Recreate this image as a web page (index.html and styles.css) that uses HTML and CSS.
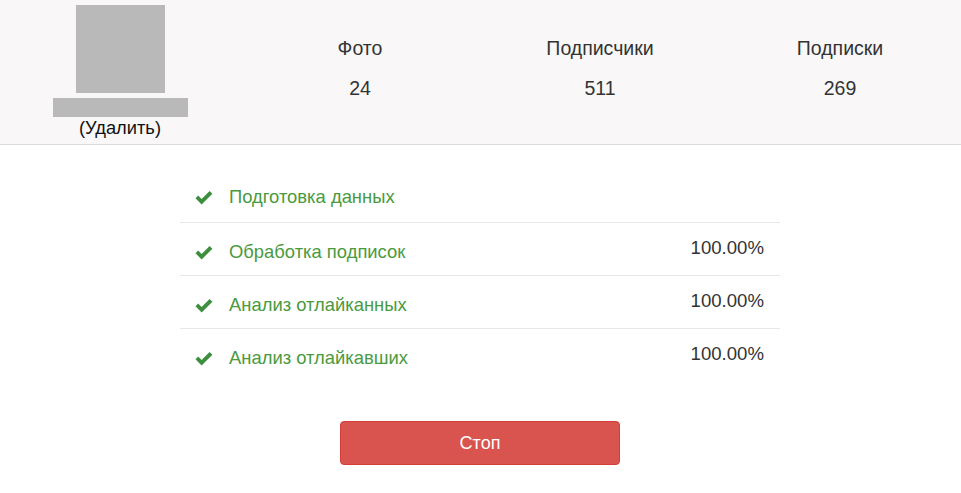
FILE: index.html
```html
<!DOCTYPE html>
<html lang="ru">
<head>
<meta charset="utf-8">
<link rel="stylesheet" href="styles.css">
</head>
<body>
<header class="profile">
  <div class="col avatar-col">
    <div class="avatar"></div>
    <div class="name-bar"></div>
    <div class="remove">(Удалить)</div>
  </div>
  <div class="col stat">
    <div class="stat-label">Фото</div>
    <div class="stat-value">24</div>
  </div>
  <div class="col stat">
    <div class="stat-label">Подписчики</div>
    <div class="stat-value">511</div>
  </div>
  <div class="col stat">
    <div class="stat-label">Подписки</div>
    <div class="stat-value">269</div>
  </div>
</header>
<main class="main">
  <ul class="tasks">
    <li class="task">
      <span class="label"><svg class="check" viewBox="0 0 18 15"><path d="M0.5 8.2 L3.2 5.6 L6.6 9 L14.6 1 L17.4 3.8 L6.6 14.5 Z" fill="#3d8f3d"/></svg>Подготовка данных</span>
    </li>
    <li class="task">
      <span class="label"><svg class="check" viewBox="0 0 18 15"><path d="M0.5 8.2 L3.2 5.6 L6.6 9 L14.6 1 L17.4 3.8 L6.6 14.5 Z" fill="#3d8f3d"/></svg>Обработка подписок</span>
      <span class="pct">100.00%</span>
    </li>
    <li class="task">
      <span class="label"><svg class="check" viewBox="0 0 18 15"><path d="M0.5 8.2 L3.2 5.6 L6.6 9 L14.6 1 L17.4 3.8 L6.6 14.5 Z" fill="#3d8f3d"/></svg>Анализ отлайканных</span>
      <span class="pct">100.00%</span>
    </li>
    <li class="task">
      <span class="label"><svg class="check" viewBox="0 0 18 15"><path d="M0.5 8.2 L3.2 5.6 L6.6 9 L14.6 1 L17.4 3.8 L6.6 14.5 Z" fill="#3d8f3d"/></svg>Анализ отлайкавших</span>
      <span class="pct">100.00%</span>
    </li>
  </ul>
  <button class="stop">Стоп</button>
</main>
</body>
</html>
```
FILE: styles.css
```css
* { box-sizing: border-box; }
html, body { margin: 0; padding: 0; background: #fff; }
body {
  font-family: "Liberation Sans", Arial, sans-serif;
  color: #333;
}
.profile {
  display: grid;
  grid-template-columns: 240px 240px 240px 240px;
  height: 145px;
  background: #f9f7f8;
  border-bottom: 1px solid #dcdcdc;
}
.col { display: flex; flex-direction: column; align-items: center; }
.avatar-col { padding-top: 5px; }
.avatar { width: 89px; height: 88px; background: #b9b9b9; }
.name-bar { width: 135px; height: 19px; background: #b9b9b9; margin-top: 5px; }
.remove { font-size: 18.3px; color: #111; line-height: 20px; margin-top: 1px; }
.stat { padding-top: 37px; font-size: 19.5px; color: #333; }
.stat-label { line-height: 23px; }
.stat-value { line-height: 23px; margin-top: 17px; }
.main { width: 960px; display: flex; flex-direction: column; align-items: center; padding-top: 24px; }
.tasks { list-style: none; margin: 0; padding: 0; width: 600px; }
.task {
  display: flex;
  justify-content: space-between;
  align-items: flex-start;
  height: 53px;
  border-top: 1px solid #e8e8e8;
  padding: 15px 16px 0 15px;
}
.task:first-child { border-top: none; height: 53px; }
.label { display: flex; align-items: center; color: #4a9a3e; font-size: 18.4px; line-height: 24px; margin-top: 1px; }
.task:not(:first-child) .label { margin-top: 2px; }
.check { width: 18px; height: 15px; margin-right: 16px; }
.pct { font-size: 18.6px; line-height: 20px; color: #333; margin-top: 0; }
.stop {
  margin-top: 40px;
  width: 280px;
  height: 44px;
  background: #d9534f;
  border: 1px solid #d43f3a;
  border-radius: 4px;
  color: #fff;
  font-family: "Liberation Sans", Arial, sans-serif;
  font-size: 18px;
}
```
